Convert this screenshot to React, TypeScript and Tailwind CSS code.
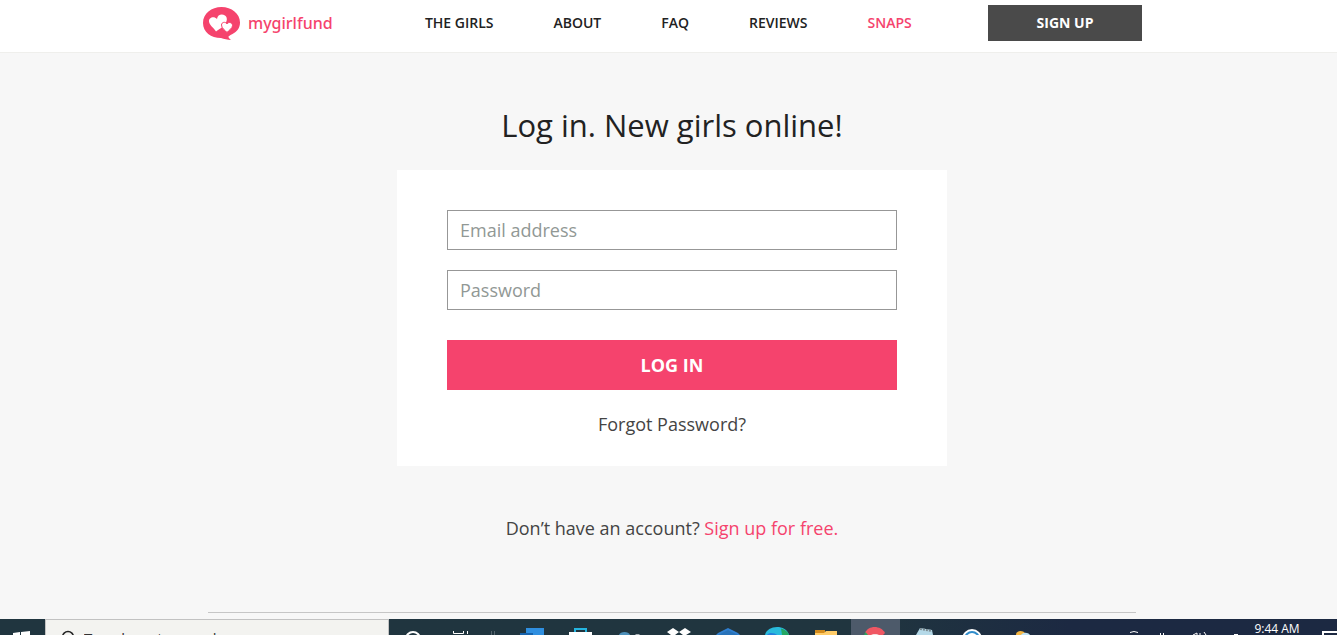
import type { ReactNode } from 'react'

const navLinks = [
  { label: 'THE GIRLS', href: '#girls' },
  { label: 'ABOUT', href: '#about' },
  { label: 'FAQ', href: '#faq' },
  { label: 'REVIEWS', href: '#reviews' },
  { label: 'SNAPS', href: '#snaps', active: true },
]

function Logo() {
  return (
    <a href="#home" className="flex items-center gap-2 text-[#f5436d]">
      <svg width="38" height="33" viewBox="0 0 38 33" aria-hidden="true">
        <path
          fill="#f5436d"
          d="M19.500 0C29.500 0 38 6.500 38 15.500C38 21 35 24.500 30.500 27C27.500 28.700 26 29.300 26.500 30.200C27 31.200 28 32 29 33C25.500 32.800 22 32 19 31C9 31 1 25 1 16C1 6.500 9.500 0 19.500 0Z"
        />
        <path
          fill="#fff"
          d="M14 24.500C12 21 7.500 18.500 7 14.500C6.500 10.500 12 8.500 15 12C15.500 7.500 20 6.500 23 8.500C26.500 11 24.500 16 21.500 19C19 21.500 16 22.500 14 24.500Z"
        />
        <path
          fill="#fff"
          stroke="#f5436d"
          strokeWidth="1"
          d="M25 25.500C23 23 19.500 21.500 19.500 18C19.500 15 23.500 14.300 25 17C26.500 14.300 30.500 15.500 30.500 18.500C30.500 21.500 27 23 25 25.500Z"
        />
      </svg>
      <span className="font-['Noto_Sans'] text-base font-medium leading-6">mygirlfund</span>
    </a>
  )
}

function Header() {
  return (
    <header className="border-b border-[#efefec] bg-white pl-[7px]">
      <div className="mx-auto flex w-full max-w-[940px] items-center justify-between pb-[11px] pt-[5px]">
        <Logo />
        <nav className="flex gap-15 pl-4">
          {navLinks.map((l) => (
            <a
              key={l.label}
              href={l.href}
              className={l.active ? 'text-sm font-semibold text-[#f5436d]' : 'text-sm font-semibold text-[#222]'}
            >
              {l.label}
            </a>
          ))}
        </nav>
        <a href="#signup" className="w-[154px] bg-[#4a4a4a] py-2 text-center text-sm font-bold text-white">
          SIGN UP
        </a>
      </div>
    </header>
  )
}

function LoginForm() {
  return (
    <form className="w-full max-w-[550px] bg-white px-[50px] pb-7 pt-10" onSubmit={(e) => e.preventDefault()}>
      <input
        type="email"
        aria-label="Email address"
        placeholder="Email address"
        className="block h-10 w-full border border-[#979797] px-3 text-lg placeholder:text-[#919895]"
      />
      <input
        type="password"
        aria-label="Password"
        placeholder="Password"
        className="mt-5 block h-10 w-full border border-[#979797] px-3 text-lg placeholder:text-[#919895]"
      />
      <button type="submit" className="mt-[30px] block h-[50px] w-full bg-[#f5436d] text-lg font-bold text-white">
        LOG IN
      </button>
      <p className="mt-5 text-center text-lg text-[#444]">
        <a href="#forgot">Forgot Password?</a>
      </p>
    </form>
  )
}

function TaskButton({ label, active, children }: { label: string; active?: boolean; children: ReactNode }) {
  return (
    <button
      type="button"
      aria-label={label}
      className={active ? 'flex h-4 w-[49px] justify-center bg-[#4d5a6a]' : 'flex h-4 w-[49px] justify-center'}
    >
      <svg width="28" height="16" viewBox="0 0 28 16" aria-hidden="true">
        {children}
      </svg>
    </button>
  )
}

function Taskbar() {
  return (
    <footer className="flex h-4 items-start overflow-hidden bg-linear-to-r from-[#20353f] from-65% to-[#1c2942] to-80%">
      <button type="button" aria-label="Start" className="flex h-4 w-[45px] justify-center">
        <svg width="20" height="16" viewBox="0 0 20 16" aria-hidden="true">
          <path fill="#fff" d="M0 14L7 13V16H0ZM8 13L17 12V16H8Z" />
        </svg>
      </button>
      <div className="flex h-[38px] w-[344px] items-center gap-2 border border-[#c2c2c2] bg-[#f3f3f0] pl-[14px]">
        <svg width="16" height="16" viewBox="0 0 16 16" fill="none" stroke="#222" strokeWidth="1.500" aria-hidden="true">
          <circle cx="8" cy="7" r="5.500" />
          <path d="M4 11L0 16" />
        </svg>
        <input
          type="search"
          aria-label="Type here to search"
          placeholder="Type here to search"
          className="w-64 text-[15px] leading-5 placeholder:text-[#333]"
        />
      </div>
      <TaskButton label="Cortana">
        <circle cx="13" cy="20" r="7" fill="none" stroke="#fff" strokeWidth="2" />
      </TaskButton>
      <TaskButton label="Task view">
        <path fill="none" stroke="#fff" d="M4.500 12V14.500H14.500V12M18.500 12V15" />
      </TaskButton>
      <svg width="21" height="16" viewBox="0 0 21 16" aria-hidden="true">
        <path stroke="#53636c" d="M4.500 12V16M7.500 12V16" />
      </svg>
      <TaskButton label="Outlook">
        <path fill="#2f8fe0" d="M7 9H25V16H7Z" />
        <path fill="#1763ad" d="M1 14H14V16H1Z" />
      </TaskButton>
      <TaskButton label="Store">
        <path fill="none" stroke="#25b5e0" strokeWidth="2" d="M7 14V10H18V14" />
        <path fill="#fff" d="M1 13H24V16H1Z" />
      </TaskButton>
      <TaskButton label="Media">
        <path fill="#4d90ba" d="M2 16C3 12 12 12 13 16Z" />
        <path fill="#aab2b8" d="M18 16L19 15H22L23 16Z" />
      </TaskButton>
      <TaskButton label="Dropbox">
        <path fill="#fff" d="M1 13L7 9L13 13L19 9L25 13L20 16H17L13 13L9 16H5Z" />
      </TaskButton>
      <TaskButton label="Mail">
        <path fill="#2f7fd0" d="M1 16L3 14L13 9L23 14L25 16Z" />
        <path fill="#2872b8" d="M3 16L13 11L23 16Z" />
      </TaskButton>
      <TaskButton label="Edge">
        <path fill="#29bbdc" d="M1 16C3 6 22 5 25 16Z" />
        <path fill="#24a763" d="M17 9.500C22 11 24 13 25 16H18Z" />
        <path fill="#2580dc" d="M3 16C5 13 11 14 13 16Z" />
      </TaskButton>
      <TaskButton label="File explorer">
        <path fill="#d38b1d" d="M2 11H12V14H2Z" />
        <path fill="#ffcc68" d="M2 14H11L13 12H24V16H2Z" />
      </TaskButton>
      <TaskButton label="Chrome" active>
        <path fill="#f05763" d="M3 14C6 6 19 6 23 14L21 16H5Z" />
        <path fill="#2ca45d" d="M2 16L3.500 13L6 16Z" />
        <path fill="#f4dcdc" d="M9 16C10 14.500 16 14.500 17 16Z" />
      </TaskButton>
      <TaskButton label="Notepad">
        <path fill="#b5d9e8" d="M9 9L21 11L22 16H5Z" />
        <path stroke="#7b8a90" strokeWidth="2" strokeDasharray="2 1" d="M9 10L21 12" />
      </TaskButton>
      <TaskButton label="Browser">
        <circle cx="12" cy="20" r="10" fill="#fff" />
        <circle cx="12" cy="20" r="7" fill="none" stroke="#318dcb" strokeWidth="2" />
      </TaskButton>
      <TaskButton label="Weather">
        <path fill="#f5b642" d="M7 16C7 11 14 11 16 14L14 16Z" />
        <path fill="#bfe2f5" d="M12 16C14 13 19 13 21 16Z" />
      </TaskButton>
      <div className="ml-auto flex h-4 items-start">
        <svg width="118" height="16" viewBox="0 0 118 16" fill="none" stroke="#fff" aria-hidden="true">
          <path d="M0 13.500Q4 11.500 8 13.500" />
          <path d="M30.500 14V16M33.500 14V16" />
          <path d="M63 16L67 14V16M70 14V16M74 13L76 16" />
          <path d="M104 15.500H108" />
        </svg>
        <time className="mt-1 w-[58px] text-center text-xs leading-3 text-white">9:44 AM</time>
        <svg width="31" height="16" viewBox="0 0 31 16" aria-hidden="true">
          <path fill="none" stroke="#fff" strokeWidth="2" d="M17 16V13H31" />
        </svg>
      </div>
    </footer>
  )
}

export default function App() {
  return (
    <div className="flex min-h-screen flex-col bg-[#f7f7f7] font-['Open_Sans','Noto_Sans',sans-serif]">
      <Header />
      <main className="flex flex-1 flex-col items-center pl-[7px]">
        <h1 className="mb-6 mt-[51px] text-center text-[31px] leading-[42px] text-[#222]">
          Log in. New girls online!
        </h1>
        <LoginForm />
        <p className="mt-12 text-lg text-[#444]">
          Don’t have an account?{' '}
          <a href="#signup" className="text-[#f5436d]">
            Sign up for free.
          </a>
        </p>
        <hr className="mt-auto mb-[6px] w-full max-w-[928px] border-[#c6c6c6]" />
      </main>
      <Taskbar />
    </div>
  )
}
